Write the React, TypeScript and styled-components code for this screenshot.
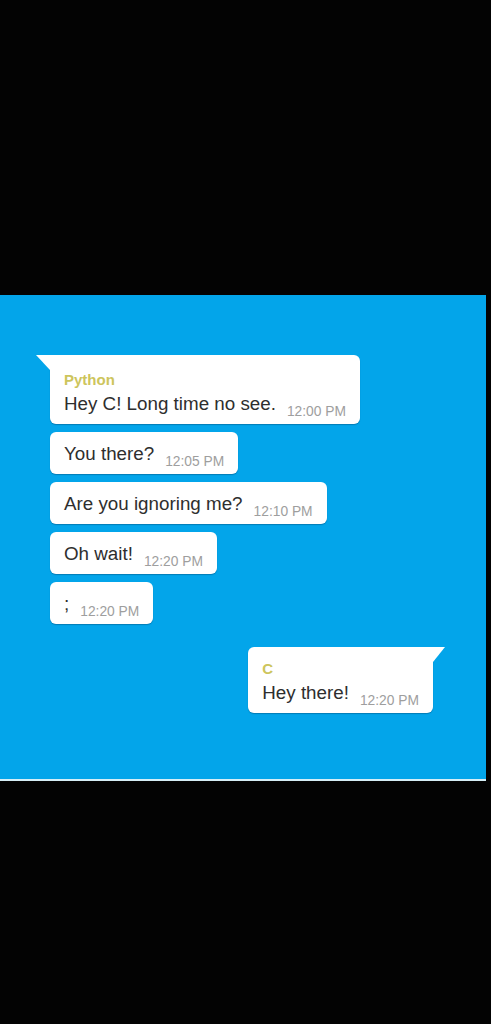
import React from "react";
import styled, { createGlobalStyle } from "styled-components";

const Global = createGlobalStyle`
  html, body {
    margin: 0;
    padding: 0;
    background: #030303;
  }
  body {
    font-family: "Liberation Sans", Arial, Helvetica, sans-serif;
  }
`;

const Page = styled.div`
  width: 491px;
  height: 1024px;
  background: #030303;
  padding-top: 295px;
  box-sizing: border-box;
`;

const Panel = styled.section`
  width: 486px;
  height: 486px;
  box-sizing: border-box;
  background: #03a5ea;
  border-bottom: 2px solid #d6eef6;
  display: flex;
  flex-direction: column;
  gap: 8px;
  padding: 60px 53px 0 50px;
`;

const Bubble = styled.div<{ $out?: boolean; $top?: number; $tail?: boolean }>`
  position: relative;
  align-self: ${(p) => (p.$out ? "flex-end" : "flex-start")};
  margin-top: ${(p) => (p.$out ? "15px" : "0")};
  background: #ffffff;
  border-radius: ${(p) =>
    p.$tail ? (p.$out ? "6px 0 6px 6px" : "0 6px 6px 6px") : "6px"};
  padding: ${(p) => p.$top ?? 10}px 14px 4px 14px;
  box-shadow: 0 1px 1px rgba(0, 50, 90, 0.35);
  display: flex;
  flex-direction: column;

  ${(p) =>
    p.$tail
      ? `&::before {
    content: "";
    position: absolute;
    top: 0;
    ${p.$out ? "right: -12px;" : "left: -14px;"}
    width: ${p.$out ? 12 : 14}px;
    height: 15px;
    background: #ffffff;
    clip-path: ${
      p.$out
        ? "polygon(0 0, 100% 0, 0 100%)"
        : "polygon(0 0, 100% 0, 100% 100%)"
    };
  }`
      : ""}
`;

const Sender = styled.div`
  font-size: 15px;
  font-weight: 700;
  line-height: 25px;
  color: #cdc55c;
`;

const Body = styled.div`
  display: flex;
  align-items: flex-end;
`;

const Text = styled.span`
  font-size: 18.8px;
  line-height: 24px;
  color: #2e2e2e;
  margin-bottom: 4px;
  white-space: nowrap;
`;

const Time = styled.span`
  font-size: 13.8px;
  line-height: 16px;
  color: #9e9e9e;
  margin-left: 11px;
  white-space: nowrap;
`;

type Msg = { text: string; time: string; sender?: string; out?: boolean };

const messages: Msg[] = [
  { sender: "Python", text: "Hey C! Long time no see.", time: "12:00 PM" },
  { text: "You there?", time: "12:05 PM" },
  { text: "Are you ignoring me?", time: "12:10 PM" },
  { text: "Oh wait!", time: "12:20 PM" },
  { text: ";", time: "12:20 PM" },
  { sender: "C", text: "Hey there!", time: "12:20 PM", out: true },
];

export default function App() {
  return (
    <>
      <Global />
      <Page>
        <Panel>
          {messages.map((m, i) => (
            <Bubble
              key={i}
              $out={m.out}
              $tail={!!m.sender}
              $top={m.sender ? (m.out ? 9 : 12) : 10}
            >
              {m.sender && <Sender>{m.sender}</Sender>}
              <Body>
                <Text>{m.text}</Text>
                <Time>{m.time}</Time>
              </Body>
            </Bubble>
          ))}
        </Panel>
      </Page>
    </>
  );
}
